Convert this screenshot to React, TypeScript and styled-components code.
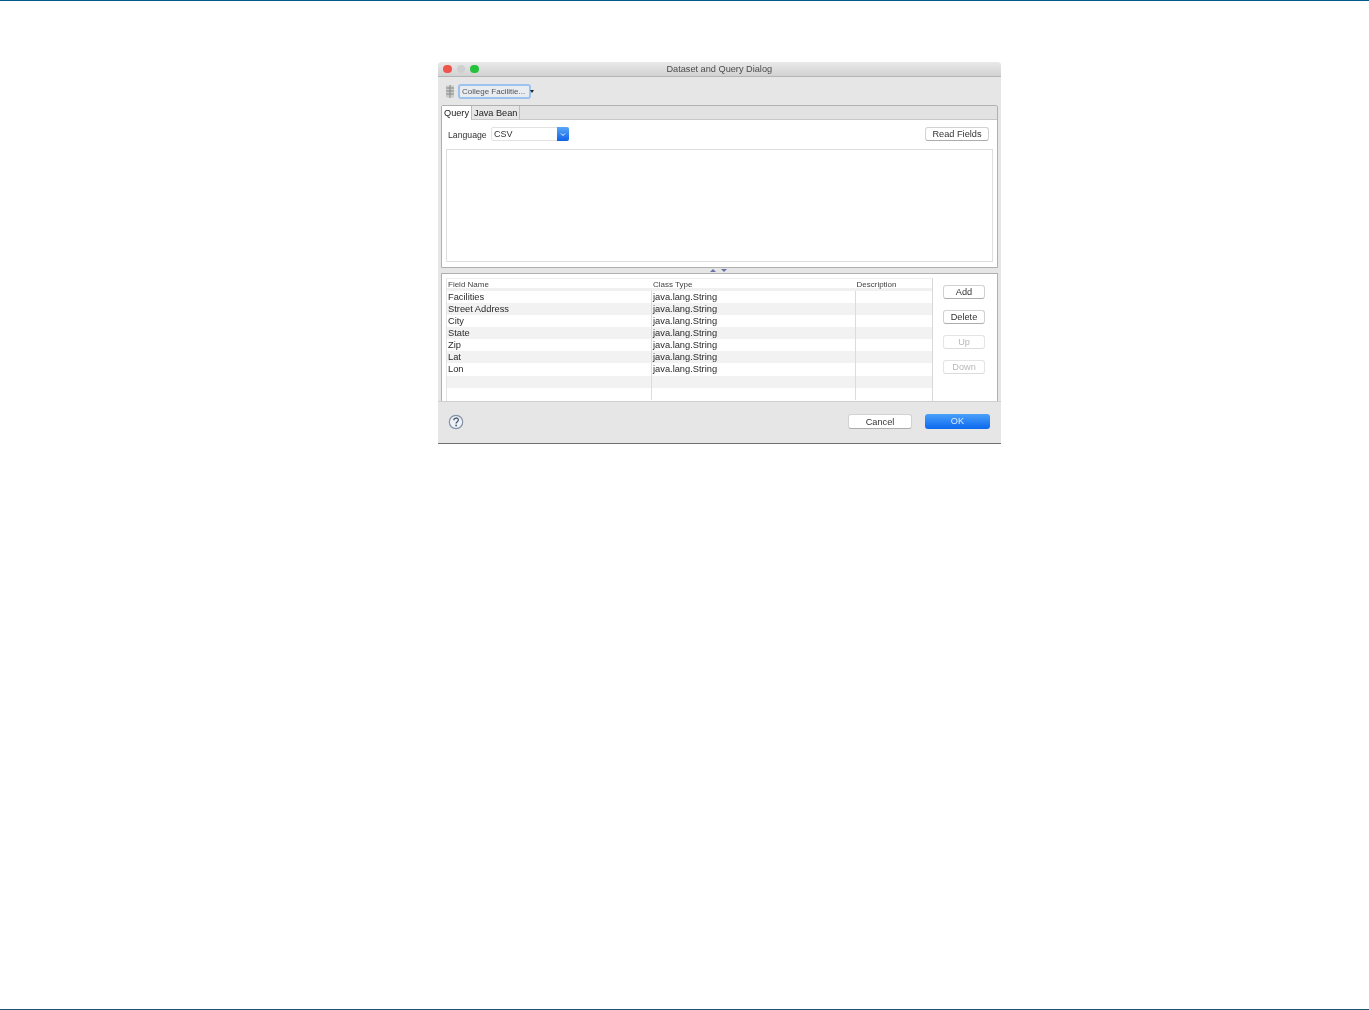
import React from 'react';
import styled, { createGlobalStyle } from 'styled-components';

const GlobalStyle = createGlobalStyle`
  html, body {
    margin: 0;
    padding: 0;
    background: #fff;
    font-family: 'Liberation Sans', Arial, sans-serif;
  }
`;

const Page = styled.div`
  height: 1010px;
  overflow: hidden;
  display: flex;
  flex-direction: column;
  justify-content: space-between;
  background: #fff;
`;

const TopRule = styled.div`
  height: 1px;
  background: #005a8c;
`;

const BottomRule = styled.div`
  height: 1px;
  background: #1c5673;
`;

const Main = styled.div`
  flex: 1;
  padding: 61px 0 0 438px;
`;

const Dialog = styled.div`
  width: 563px;
  height: 382px;
  display: flex;
  flex-direction: column;
  background: #e6e6e6;
  border-radius: 4px 4px 0 0;
  border-bottom: 1px solid #6f6f6f;
  box-sizing: border-box;
  overflow: hidden;
  color: #222;
  filter: blur(0.6px);
`;

const TitleBar = styled.div`
  height: 15px;
  box-sizing: border-box;
  flex: none;
  display: flex;
  align-items: center;
  padding-left: 5px;
  background: linear-gradient(#e9e9e9, #d2d2d2);
  border-bottom: 1px solid #b4b4b4;
`;

const Light = styled.span<{ $color: string }>`
  width: 8.5px;
  height: 8.5px;
  margin-right: 5px;
  border-radius: 50%;
  background: ${(p) => p.$color};
  flex: none;
`;

const TitleText = styled.div`
  flex: 1;
  text-align: center;
  font-size: 9.2px;
  line-height: 15px;
  padding: 1px 46px 0 0;
  color: #4a4a4a;
`;

const Toolbar = styled.div`
  height: 27px;
  box-sizing: border-box;
  padding: 1px 0 0 7px;
  flex: none;
  display: flex;
  align-items: center;
`;

const DataSetIcon = styled.svg`
  width: 10px;
  height: 13px;
  margin-right: 4px;
`;

const SetButton = styled.div`
  width: 67px;
  height: 11px;
  box-sizing: content-box;
  border: 1px solid #fff;
  outline: 2px solid #9cc2f0;
  outline-offset: -1px;
  border-radius: 2px;
  background: #e9ecf1;
  font-size: 8px;
  line-height: 11px;
  color: #555;
  padding-left: 2px;
  white-space: nowrap;
  overflow: hidden;
`;

const SmallCaret = styled.span`
  width: 0;
  height: 0;
  margin-left: 0;
  border-left: 2px solid transparent;
  border-right: 2px solid transparent;
  border-top: 3px solid #222;
`;

const TabFrame = styled.div`
  margin: 1px 3px 0;
  height: 163px;
  flex: none;
  display: flex;
  flex-direction: column;
  box-sizing: border-box;
  border: 1px solid #b0b0b0;
  border-radius: 2px 2px 0 0;
  background: #fff;
`;

const TabStrip = styled.div`
  height: 14px;
  box-sizing: border-box;
  flex: none;
  display: flex;
  background: #e2e2e2;
  border-bottom: 1px solid #c8c8c8;
`;

const Tab = styled.div<{ $active?: boolean }>`
  font-size: 9.2px;
  line-height: 14px;
  padding: 0 2px;
  color: #222;
  background: ${(p) => (p.$active ? '#fff' : '#e6e6e6')};
  border-right: 1px solid #bcbcbc;
  height: ${(p) => (p.$active ? '14px' : '13px')};
  position: relative;
`;

const QueryPane = styled.div`
  flex: 1;
  display: flex;
  flex-direction: column;
  padding: 0 4px 5px 4px;
`;

const LanguageRow = styled.div`
  height: 29px;
  flex: none;
  display: flex;
  align-items: center;
  padding-left: 2px;
`;

const FieldLabel = styled.span`
  font-size: 8.7px;
  color: #333;
  width: 43px;
`;

const Combo = styled.div`
  width: 78px;
  height: 14px;
  display: flex;
  border-radius: 2px;
  border: 1px solid #e2e2e2;
  box-sizing: border-box;
  font-size: 9px;
  line-height: 13px;
  color: #333;
  padding-left: 2px;
  justify-content: space-between;
  margin-top: -1px;
`;

const ComboArrow = styled.span`
  width: 12px;
  height: 14px;
  margin: -1px -1px 0 0;
  border-radius: 0 2px 2px 0;
  background: linear-gradient(#5aa6f8, #0f62e6);
  display: flex;
  align-items: center;
  justify-content: center;
`;

const Button = styled.div<{ $disabled?: boolean; $w: number }>`
  width: ${(p) => p.$w}px;
  height: 14px;
  box-sizing: border-box;
  border: 1px solid ${(p) => (p.$disabled ? '#e4e4e4' : '#d2d2d2')};
  border-bottom-color: ${(p) => (p.$disabled ? '#dcdcdc' : '#adadad')};
  border-radius: 3px;
  background: #fff;
  font-size: 9.2px;
  line-height: 13px;
  text-align: center;
  color: ${(p) => (p.$disabled ? '#b8b8b8' : '#333')};
`;

const ReadFields = styled(Button)`
  margin-left: auto;
  margin-right: 4px;
  margin-top: -1px;
`;

const QueryArea = styled.div`
  flex: 1;
  border: 1px solid #dedede;
  background: #fff;
`;

const Sash = styled.div`
  height: 5px;
  flex: none;
  display: flex;
  justify-content: center;
  align-items: center;
  gap: 5px;
  padding-right: 2px;
`;

const SashUp = styled.span`
  border-left: 3px solid transparent;
  border-right: 3px solid transparent;
  border-bottom: 3px solid #6a70a8;
`;

const SashDown = styled.span`
  border-left: 3px solid transparent;
  border-right: 3px solid transparent;
  border-top: 3px solid #6a70a8;
`;

const FieldsPanel = styled.div`
  margin: 0 3px;
  flex: 1;
  min-height: 0;
  display: flex;
  box-sizing: border-box;
  border: 1px solid #b0b0b0;
  border-bottom: none;
  background: #fff;
  padding: 4px 0 0 4px;
`;

const Table = styled.div`
  width: 487px;
  flex: none;
  border-left: 1px solid #e4e4e4;
  border-right: 1px solid #d8d8d8;
  border-top: 1px solid #eee;
  box-sizing: border-box;
`;

const Row = styled.div<{ $striped?: boolean }>`
  display: grid;
  grid-template-columns: 205px 203.5px 1fr;
  height: 12.15px;
  background: ${(p) => (p.$striped ? '#f2f2f2' : '#fff')};
`;

const HeadRow = styled(Row)`
  height: 8.6px;
  border-bottom: 3px solid #f0f0f0;
  box-sizing: content-box;
`;

const HeadCell = styled.div`
  font-size: 8px;
  line-height: 11px;
  color: #444;
  padding-left: 1px;
  white-space: nowrap;
`;

const Cell = styled.div`
  font-size: 9.3px;
  line-height: 12px;
  color: #2a2a2a;
  padding-left: 1px;
  white-space: nowrap;
  border-right: 1px solid #dcdcdc;
  &:last-child {
    border-right: none;
  }
`;

const SideButtons = styled.div`
  flex: 1;
  display: flex;
  flex-direction: column;
  align-items: center;
  gap: 11px;
  padding: 7px 2px 0 0;
`;

const Footer = styled.div`
  height: 42px;
  flex: none;
  display: flex;
  align-items: center;
  padding: 0 11px 2px 10px;
  border-top: 1px solid #cfcfcf;
  background: #e6e6e6;
  box-sizing: border-box;
`;

const HelpIcon = styled.svg`
  width: 16px;
  height: 16px;
  flex: none;
`;

const FooterButton = styled(Button)`
  margin-left: auto;
  margin-right: 13px;
  height: 15px;
  line-height: 14px;
`;

const OkButton = styled.div`
  width: 65px;
  height: 15px;
  border-radius: 3px;
  background: linear-gradient(#4aa0fa, #0c68ee);
  color: #dce9fb;
  font-size: 9.2px;
  line-height: 15px;
  text-align: center;
`;

const fields = ['Facilities', 'Street Address', 'City', 'State', 'Zip', 'Lat', 'Lon', '', ''];

export default function App() {
  return (
    <Page>
      <GlobalStyle />
      <TopRule />
      <Main>
        <Dialog>
          <TitleBar>
            <Light $color="#f0524c" />
            <Light $color="#cfcfcf" />
            <Light $color="#27c23c" />
            <TitleText>Dataset and Query Dialog</TitleText>
          </TitleBar>
          <Toolbar>
            <DataSetIcon viewBox="0 0 10 13">
              <rect x="1" y="0.5" width="8" height="12" fill="#c9ccc9" />
              <path d="M5 0v13M1 3h8M1 6h8M1 9h8" stroke="#858b88" strokeWidth="1" />
            </DataSetIcon>
            <SetButton>College Facilitie...</SetButton>
            <SmallCaret />
          </Toolbar>
          <TabFrame>
            <TabStrip>
              <Tab $active>Query</Tab>
              <Tab>Java Bean</Tab>
            </TabStrip>
            <QueryPane>
              <LanguageRow>
                <FieldLabel>Language</FieldLabel>
                <Combo>
                  CSV
                  <ComboArrow>
                    <svg width="6" height="5" viewBox="0 0 6 5">
                      <path d="M1 1.5l2 2 2-2" fill="none" stroke="#fff" strokeWidth="1" />
                    </svg>
                  </ComboArrow>
                </Combo>
                <ReadFields $w={64}>Read Fields</ReadFields>
              </LanguageRow>
              <QueryArea />
            </QueryPane>
          </TabFrame>
          <Sash>
            <SashUp />
            <SashDown />
          </Sash>
          <FieldsPanel>
            <Table>
              <HeadRow>
                <HeadCell>Field Name</HeadCell>
                <HeadCell>Class Type</HeadCell>
                <HeadCell>Description</HeadCell>
              </HeadRow>
              {fields.map((name, i) => (
                <Row key={i} $striped={i % 2 === 1}>
                  <Cell>{name}</Cell>
                  <Cell>{name ? 'java.lang.String' : ''}</Cell>
                  <Cell />
                </Row>
              ))}
            </Table>
            <SideButtons>
              <Button $w={42}>Add</Button>
              <Button $w={42}>Delete</Button>
              <Button $w={42} $disabled>Up</Button>
              <Button $w={42} $disabled>Down</Button>
            </SideButtons>
          </FieldsPanel>
          <Footer>
            <HelpIcon viewBox="0 0 16 16">
              <circle cx="8" cy="8" r="6.7" fill="#eef1f6" stroke="#8493a6" strokeWidth="1.2" />
              <path d="M5.8 6.3c0-3 4.6-3 4.6-.2 0 1.6-2.3 1.6-2.3 3.4" fill="none" stroke="#4a5a70" strokeWidth="1.3" />
              <circle cx="8.1" cy="11.5" r="0.9" fill="#4a5a70" />
            </HelpIcon>
            <FooterButton $w={64}>Cancel</FooterButton>
            <OkButton>OK</OkButton>
          </Footer>
        </Dialog>
      </Main>
      <BottomRule />
    </Page>
  );
}
